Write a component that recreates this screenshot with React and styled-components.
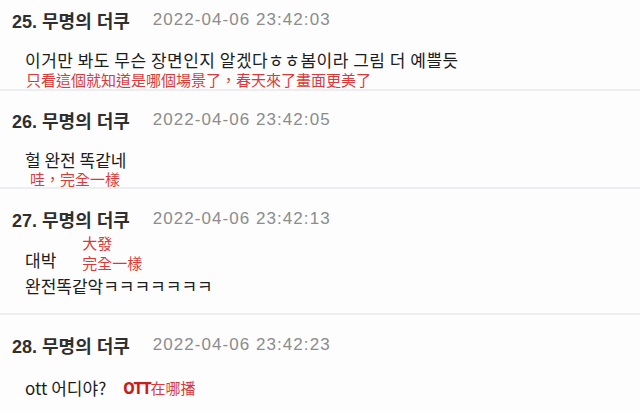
import React from 'react';
import styled, { createGlobalStyle } from 'styled-components';

const GlobalStyle = createGlobalStyle`
  html, body {
    margin: 0;
    padding: 0;
    background: #fdfdfd;
  }
`

const List = styled.div`
  width: 640px;
  height: 412px;
  overflow: hidden;
  background: #fdfdfd;
  font-family: "Noto Sans CJK KR", "Noto Sans", sans-serif;
`

const Comment = styled.div`
  padding: ${p => p.$top}px 0 ${p => p.$bottom || 0}px;
  border-bottom: 2px solid #eeedf1;

  &:last-child {
    border-bottom: none;
  }
`

const Header = styled.div`
  display: flex;
  align-items: center;
  height: 24px;
  padding-left: 12px;
  margin-bottom: ${p => p.$gap ?? 17}px;
`

const Author = styled.span`
  font-size: 18px;
  font-weight: 700;
  color: #2f2f2f;
  font-family: "Liberation Sans", "Noto Sans CJK KR", sans-serif;
`

const Time = styled.span`
  margin-left: 23px;
  font-size: 17px;
  color: #8c8c8c;
  letter-spacing: 1.05px;
  font-family: "Liberation Sans", sans-serif;
`

const Body = styled.div`
  padding-left: 25px;
`

const Row = styled.div`
  display: flex;
  align-items: ${p => p.$align || 'center'};
  gap: ${p => p.$gap || 0}px;
`

const Text = styled.div`
  font-size: 17px;
  line-height: 22px;
  letter-spacing: ${p => p.$spacing || 0}px;
  margin-top: ${p => p.$mt || 0}px;
  margin-bottom: ${p => p.$mb || 0}px;
  color: #1c1c1c;
  white-space: nowrap;
`

const Note = styled.div`
  font-family: "Noto Sans CJK TC", sans-serif;
  font-size: 15px;
  line-height: ${p => p.$lh || 18}px;
  margin-left: ${p => p.$ml || 0}px;
  color: #d63b3b;
  white-space: nowrap;
`

const Stack = styled.div`
  display: flex;
  flex-direction: column;
`

const Tag = styled.span`
  font-family: "DejaVu Sans Condensed", "DejaVu Sans", sans-serif;
  font-weight: 700;
  letter-spacing: -1px;
  color: #c81e1e;
`

const CommentHead = ({ no, time, gap }) => (
  <Header $gap={gap}>
    <Author>{no}. 무명의 더쿠</Author>
    <Time>{time}</Time>
  </Header>
)

export default function App() {
  return (
    <>
      <GlobalStyle />
      <List>
        <Comment $top={8}>
          <CommentHead no={25} time="2022-04-06 23:42:03" />
          <Body>
            <Text $spacing={0.5}>이거만 봐도 무슨 장면인지 알겠다ㅎㅎ봄이라 그림 더 예쁠듯</Text>
            <Note $ml={1}>只看這個就知道是哪個場景了，春天來了畫面更美了</Note>
          </Body>
        </Comment>

        <Comment $top={17}>
          <CommentHead no={26} time="2022-04-06 23:42:05" />
          <Body>
            <Text>헐 완전 똑같네</Text>
            <Note $lh={16} $ml={5}>哇，完全一樣</Note>
          </Body>
        </Comment>

        <Comment $top={18} $bottom={16}>
          <CommentHead no={27} time="2022-04-06 23:42:13" gap={2} />
          <Body>
            <Row $align="flex-end" $gap={26}>
              <Text $mb={2}>대박</Text>
              <Stack>
                <Note $lh={20}>大發</Note>
                <Note $lh={20}>完全一樣</Note>
              </Stack>
            </Row>
            <Text $mt={2}>완전똑같악ㅋㅋㅋㅋㅋㅋㅋ</Text>
          </Body>
        </Comment>

        <Comment $top={18}>
          <CommentHead no={28} time="2022-04-06 23:42:23" gap={20} />
          <Body>
            <Row $gap={17}>
              <Text>ott 어디야?</Text>
              <Note><Tag>OTT</Tag>在哪播</Note>
            </Row>
          </Body>
        </Comment>
      </List>
    </>
  );
}
